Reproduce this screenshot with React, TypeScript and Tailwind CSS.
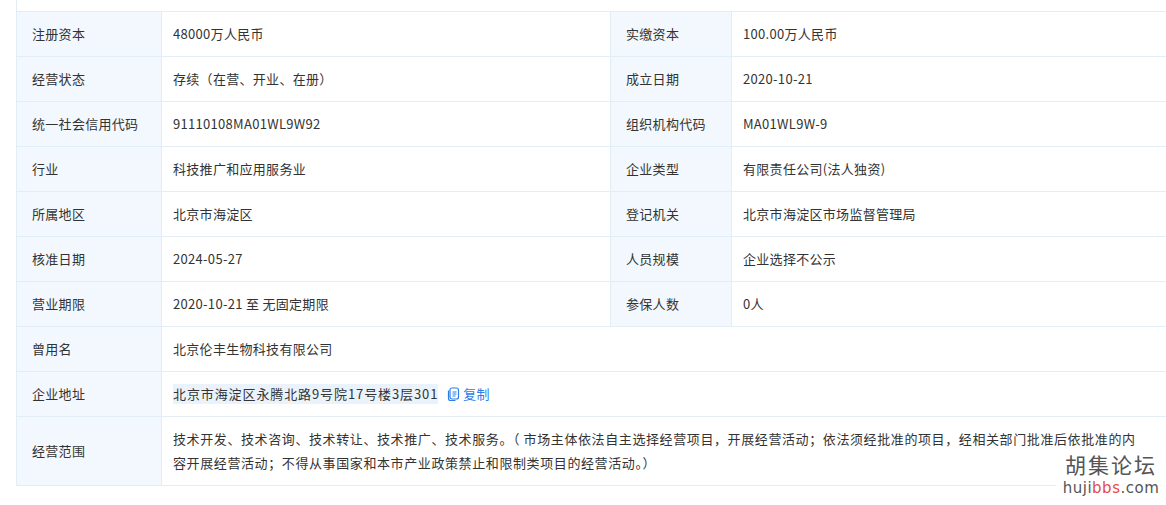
import React from "react";

const L = "bg-[#f2f8fd] border-r border-b border-[#e3edf5] pl-[15px] flex items-center text-[#333]";
const V = "border-r border-b border-[#e3edf5] px-[11px] flex items-center text-[#333]";

const pairs: [string, string, string, string][] = [
  ["注册资本", "48000万人民币", "实缴资本", "100.00万人民币"],
  ["经营状态", "存续（在营、开业、在册）", "成立日期", "2020-10-21"],
  ["统一社会信用代码", "91110108MA01WL9W92", "组织机构代码", "MA01WL9W-9"],
  ["行业", "科技推广和应用服务业", "企业类型", "有限责任公司(法人独资)"],
  ["所属地区", "北京市海淀区", "登记机关", "北京市海淀区市场监督管理局"],
  ["核准日期", "2024-05-27", "人员规模", "企业选择不公示"],
  ["营业期限", "2020-10-21 至 无固定期限", "参保人数", "0人"],
];

export default function App() {
  return (
    <div className="w-[1166px] h-[505px] bg-white overflow-hidden relative text-[13px] tracking-[0.3px]" style={{ fontFamily: '"Microsoft YaHei","Noto Sans CJK SC",sans-serif' }}>
      <div className="ml-[16px] w-[1170px] border-l border-[#e3edf5]">
        <div className="h-[12px] border-b border-[#e3edf5]" />
        <div className="grid grid-cols-[145px_449px_121px_1fr]">
          {pairs.map((r, i) => (
            <React.Fragment key={i}>
              <div className={L + " h-[45px]"}>{r[0]}</div>
              <div className={V + " h-[45px]"}>{r[1]}</div>
              <div className={L + " h-[45px]"}>{r[2]}</div>
              <div className={V + " h-[45px]"}>{r[3]}</div>
            </React.Fragment>
          ))}
          <div className={L + " h-[45px]"}>曾用名</div>
          <div className={V + " h-[45px] col-span-3"}>北京伦丰生物科技有限公司</div>
          <div className={L + " h-[45px]"}>企业地址</div>
          <div className={V + " h-[45px] col-span-3"}>
            <span className="bg-[#eaf2fb] tracking-[0.9px]">北京市海淀区永腾北路9号院17号楼3层301</span>
            <span className="ml-[9px] flex items-center text-[#2b7de9]">
              <svg width="13" height="14" viewBox="0 0 13 14" fill="none" stroke="#2b7de9" strokeWidth="1.2">
                <rect x="3" y="1" width="8.5" height="11" rx="2" />
                <path d="M1.5 3.5v8a2 2 0 0 0 2 2h5" />
                <path d="M5.5 5h4M5.5 7h4M5.5 9h3" />
              </svg>
              <span className="ml-[3px]">复制</span>
            </span>
          </div>
          <div className={L + " h-[69px]"}>经营范围</div>
          <div className={V + " h-[69px] col-span-3 leading-[24px] whitespace-nowrap"}>
            <div className="tracking-[0.6px]">
              <div>技术开发、技术咨询、技术转让、技术推广、技术服务。（ 市场主体依法自主选择经营项目，开展经营活动；依法须经批准的项目，经相关部门批准后依批准的内</div>
              <div>容开展经营活动；不得从事国家和本市产业政策禁止和限制类项目的经营活动。）</div>
            </div>
          </div>
        </div>
      </div>
      <div className="absolute left-[1056px] top-[450px] w-[110px] text-center bg-white/80 tracking-normal">
        <div className="text-[21px] text-[#555] tracking-[2px] leading-[28px]">胡集论坛</div>
        <div className="text-[15px] text-[#555] leading-[20px] tracking-[0.5px]" style={{ fontFamily: '"DejaVu Sans",sans-serif' }}>huji<span className="text-[#e84a4a]">bbs</span>.com</div>
      </div>
    </div>
  );
}
